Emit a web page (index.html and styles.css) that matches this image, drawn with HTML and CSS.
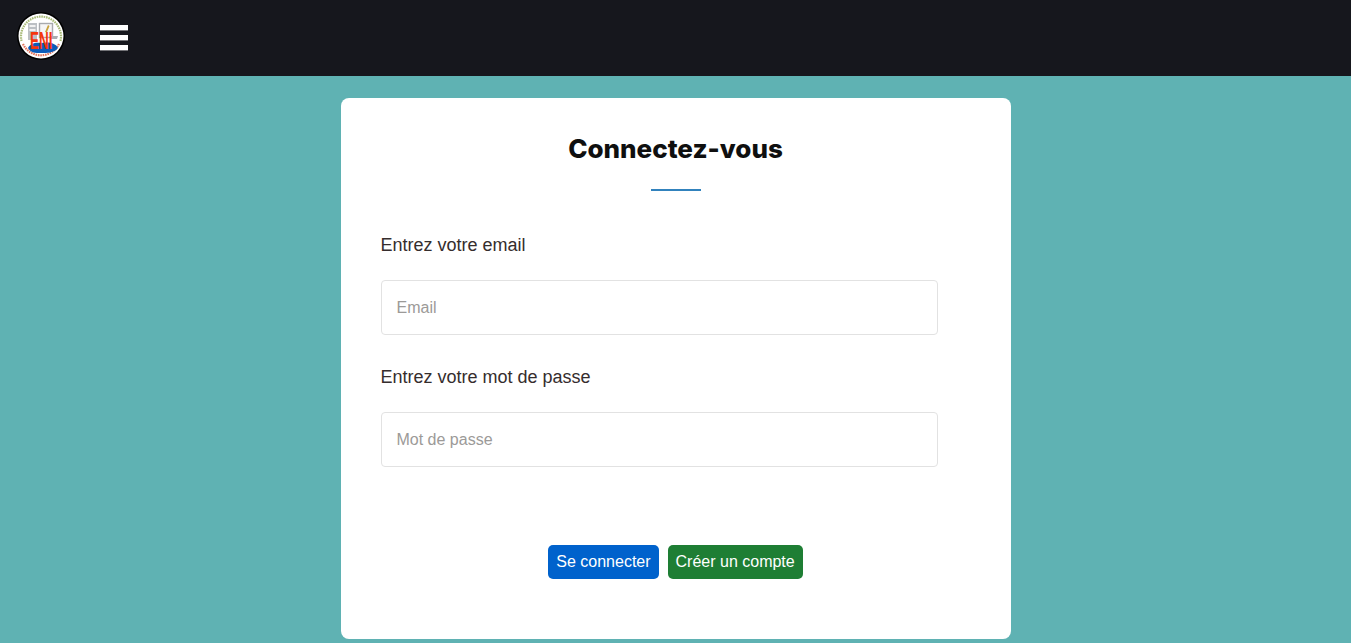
FILE: index.html
```
<!DOCTYPE html>
<html lang="fr">
<head>
<meta charset="utf-8">
<title>Connexion</title>
<link rel="stylesheet" href="styles.css">
</head>
<body>
<header class="topbar">
  <svg class="logo" viewBox="0 0 48 48" width="48" height="48" aria-hidden="true">
    <circle cx="24" cy="24" r="24" fill="#000"/>
    <circle cx="24" cy="24" r="22.5" fill="#fff"/>
    <path d="M4.5 29A20 20 0 1 1 43.5 29" fill="none" stroke="#a9bb78" stroke-width="2.2" stroke-dasharray="1.6 0.8"/>
    <path d="M6 32A20 20 0 0 0 42 32" fill="none" stroke="#e2745c" stroke-width="2.2" stroke-dasharray="1.6 0.8"/>
    <rect x="11" y="11" width="9" height="17" fill="#bcc0c4"/>
    <rect x="12.5" y="13" width="6" height="2" fill="#f2f2f2"/>
    <rect x="12.5" y="17" width="6" height="2" fill="#f2f2f2"/>
    <rect x="22.5" y="11.5" width="13" height="14" fill="#f6f6f6" stroke="#a8aaae" stroke-width="1.4"/>
    <path d="M28 20l3-7 1.5 1-2.5 6z" fill="#c9a23a"/>
    <path d="M34 24h7l-1 3h-6z" fill="#a9abb0"/>
    <path d="M11 36c2-4 7-6 13-5 6-1 14-1 17 5-4 5-11 5-17 5s-10 0-13-5z" fill="#0d5cb8"/>
    <text class="logo-text" transform="translate(13 36.5) scale(1 1.75)">ENI</text>
  </svg>
  <button class="menu" type="button" aria-label="Menu">
    <span class="menu-bar"></span>
    <span class="menu-bar"></span>
    <span class="menu-bar"></span>
  </button>
</header>
<main class="page">
  <form class="card">
    <h1 class="title">Connectez-vous</h1>
    <div class="rule"></div>
    <label class="label" for="email">Entrez votre email</label>
    <input class="field" id="email" type="email" placeholder="Email">
    <label class="label label-second" for="pass">Entrez votre mot de passe</label>
    <input class="field" id="pass" type="password" placeholder="Mot de passe">
    <div class="actions">
      <button class="btn btn-blue" type="button">Se connecter</button>
      <button class="btn btn-green" type="button">Créer un compte</button>
    </div>
  </form>
</main>
</body>
</html>
```
FILE: styles.css
```
* {
  box-sizing: border-box;
}

html,
body {
  margin: 0;
  height: 100%;
}

body {
  background: #5fb2b3;
  font-family: "Liberation Sans", Arial, sans-serif;
  overflow: hidden;
}

.topbar {
  height: 76px;
  background: #16171d;
  display: flex;
  align-items: center;
  padding: 0 0 4px 17px;
  gap: 35px;
}

.logo {
  display: block;
  flex: none;
}

.logo-text {
  font-family: "Liberation Sans", Arial, sans-serif;
  font-size: 13.5px;
  font-weight: 700;
  fill: #f5360c;
}

.menu {
  background: none;
  border: 0;
  padding: 0;
  margin-top: 3px;
  display: flex;
  flex-direction: column;
  gap: 5px;
  width: 28px;
}

.menu-bar {
  display: block;
  height: 5px;
  background: #fff;
  box-shadow: 0 1px 0 rgba(255, 255, 255, 0.4);
}

.page {
  display: flex;
  justify-content: center;
  padding-top: 22px;
}

.card {
  width: 670px;
  height: 541px;
  background: #fff;
  border-radius: 8px;
  padding: 36px 40px 0;
}

.title {
  margin: 0;
  text-align: center;
  font-family: "Inter", "Liberation Sans", sans-serif;
  font-size: 26px;
  line-height: 30px;
  font-weight: 800;
  color: #0f0f0f;
}

.rule {
  width: 50px;
  height: 2px;
  margin: 25px auto 0;
  background: #3182bd;
}

.label {
  display: block;
  margin-top: 44px;
  font-size: 18px;
  line-height: 21px;
  color: #352d2d;
}

.label-second {
  margin-top: 32px;
}

.field {
  display: block;
  width: 557px;
  height: 55px;
  margin-top: 24px;
  padding: 0 15px;
  border: 1px solid #e2e2e2;
  border-radius: 4px;
  background: #fff;
  font: 16px "Liberation Sans", Arial, sans-serif;
  color: #2d2626;
}

.field::placeholder {
  color: #9c9a98;
  opacity: 1;
}

.actions {
  display: flex;
  justify-content: center;
  gap: 9px;
  margin-top: 78px;
}

.btn {
  height: 34px;
  padding: 0 8px;
  border: 0;
  border-radius: 5px;
  color: #fff;
  font: 16px "Liberation Sans", Arial, sans-serif;
}

.btn-blue {
  background: #0062cc;
}

.btn-green {
  background: #1e7e34;
}
```
